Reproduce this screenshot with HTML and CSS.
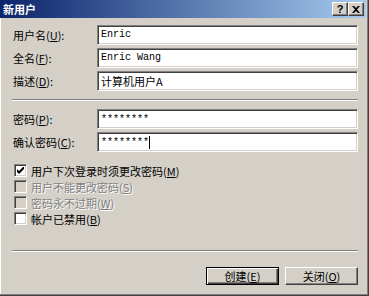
FILE: index.html
```html
<!DOCTYPE html>
<html lang="zh-CN">
<head>
  <meta charset="UTF-8" />
  <title>新用户</title>
  <link rel="stylesheet" href="styles.css">
</head>
<body>
  <div class="window">
    <div class="titlebar">
      <span class="title">新用户</span>
      <div class="title-buttons">
        <span class="tbtn">?</span>
        <span class="tbtn">
          <svg width="8" height="7" viewBox="0 0 8 7"><path d="M0 0h2l2 2 2-2h2L5 3.5 8 7H6L4 5 2 7H0l3-3.5z" fill="#000"/></svg>
        </span>
      </div>
    </div>

    <div class="content">
      <div class="form-grid">
        <label>用户名(<u>U</u>):</label>
        <div class="field mono">Enric</div>
        <label>全名(<u>F</u>):</label>
        <div class="field mono">Enric Wang</div>
        <label>描述(<u>D</u>):</label>
        <div class="field">计算机用户A</div>
      </div>

      <hr class="sep">

      <div class="form-grid">
        <label>密码(<u>P</u>):</label>
        <div class="field mono stars">********</div>
        <label>确认密码(<u>C</u>):</label>
        <div class="field mono stars">********<span class="caret"></span></div>
      </div>

      <div class="checks">
        <div class="check">
          <span class="box">
            <svg width="7" height="7" viewBox="0 0 7 7"><path d="M0 2v3l2 2 5-5V-1L2 4z" fill="#000"/></svg>
          </span>
          <span>用户下次登录时须更改密码(<u>M</u>)</span>
        </div>
        <div class="check disabled">
          <span class="box"></span>
          <span>用户不能更改密码(<u>S</u>)</span>
        </div>
        <div class="check disabled">
          <span class="box"></span>
          <span>密码永不过期(<u>W</u>)</span>
        </div>
        <div class="check">
          <span class="box"></span>
          <span>帐户已禁用(<u>B</u>)</span>
        </div>
      </div>

      <div class="footer">
        <hr class="sep sep-bottom">
        <div class="buttons">
          <button class="btn default">创建(<u>E</u>)</button>
          <button class="btn">关闭(<u>O</u>)</button>
        </div>
      </div>
    </div>
  </div>
</body>
</html>
```

FILE: styles.css
```css
body {
  margin: 0;
  background: #d4d0c8;
  font-family: "Noto Sans CJK SC", "DejaVu Sans", sans-serif;
  font-size: 11px;
  color: #000;
}

.window {
  width: 369px;
  height: 296px;
  box-sizing: border-box;
  display: flex;
  flex-direction: column;
  background: #d4d0c8;
  border-right: 1px solid #404040;
  border-bottom: 1px solid #404040;
  box-shadow: inset -1px -1px 0 #808080, inset 1px 0 0 #fff;
}

.titlebar {
  height: 18px;
  flex: none;
  margin-right: 2px;
  display: flex;
  justify-content: space-between;
  align-items: center;
  padding: 0 2px 0 3px;
  background: linear-gradient(to right, #0a246a, #a6caf0);
}

.title {
  color: #fff;
  font-weight: bold;
  font-size: 11px;
  line-height: 18px;
}

.title-buttons {
  display: flex;
}

.tbtn {
  width: 16px;
  height: 14px;
  box-sizing: border-box;
  display: flex;
  align-items: center;
  justify-content: center;
  background: #d4d0c8;
  border-top: 1px solid #fff;
  border-left: 1px solid #fff;
  border-right: 1px solid #404040;
  border-bottom: 1px solid #404040;
  box-shadow: inset -1px -1px 0 #808080;
  font-family: "Liberation Sans", sans-serif;
  font-weight: bold;
  font-size: 11px;
  line-height: 12px;
}

.content {
  flex: 1;
  display: flex;
  flex-direction: column;
  padding: 7px 10px 10px 12px;
}

.form-grid {
  display: grid;
  grid-template-columns: 85px 1fr;
  row-gap: 3px;
  align-items: center;
}

.form-grid label {
  padding-left: 1px;
  white-space: nowrap;
}

.field {
  height: 20px;
  box-sizing: border-box;
  background: #fff;
  border-top: 1px solid #808080;
  border-left: 1px solid #808080;
  border-right: 1px solid #fff;
  border-bottom: 1px solid #fff;
  box-shadow: inset 1px 1px 0 #404040, inset -1px -1px 0 #d4d0c8;
  padding: 0 3px;
  line-height: 18px;
  white-space: nowrap;
  overflow: hidden;
}

.mono {
  font-family: "Liberation Mono", monospace;
  font-size: 10px;
}

.stars {
  line-height: 20px;
}

.caret {
  display: inline-block;
  width: 1px;
  height: 13px;
  background: #000;
  vertical-align: middle;
}

.sep {
  height: 0;
  margin: 8px 0 8px;
  border: 0;
  border-top: 1px solid #808080;
  border-bottom: 1px solid #fff;
}

.checks {
  margin-top: 12px;
  display: flex;
  flex-direction: column;
  gap: 3px;
}

.check {
  display: flex;
  align-items: center;
  gap: 4px;
  height: 13px;
  padding-left: 2px;
}

.box {
  width: 13px;
  height: 13px;
  box-sizing: border-box;
  display: flex;
  align-items: center;
  justify-content: center;
  background: #fff;
  border-top: 1px solid #808080;
  border-left: 1px solid #808080;
  border-right: 1px solid #fff;
  border-bottom: 1px solid #fff;
  box-shadow: inset 1px 1px 0 #404040, inset -1px -1px 0 #d4d0c8;
}

.disabled {
  color: #808080;
  text-shadow: 1px 1px 0 #fff;
}

.disabled .box {
  background: #d4d0c8;
}

.footer {
  margin-top: auto;
}

.sep-bottom {
  margin: 0 0 15px;
}

.buttons {
  display: flex;
  justify-content: flex-end;
  gap: 6px;
}

.btn {
  width: 73px;
  height: 18px;
  box-sizing: border-box;
  padding: 0;
  font-family: "Noto Sans CJK SC", sans-serif;
  font-size: 11px;
  line-height: 14px;
  color: #000;
  background: #d4d0c8;
  border-top: 1px solid #fff;
  border-left: 1px solid #fff;
  border-right: 1px solid #404040;
  border-bottom: 1px solid #404040;
  box-shadow: inset -1px -1px 0 #808080;
}

.btn.default {
  border: 1px solid #000;
  box-shadow: inset 1px 1px 0 #fff, inset -1px -1px 0 #404040, inset -2px -2px 0 #808080;
}
```
